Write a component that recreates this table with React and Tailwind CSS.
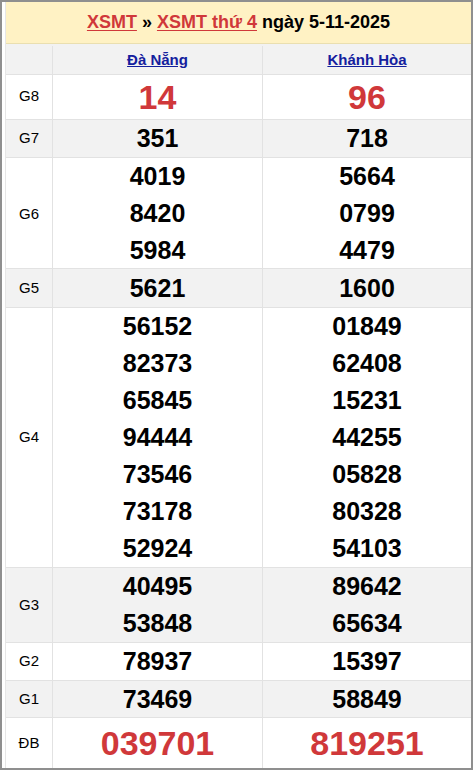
const rows = [
  { g: 'G8', a: ['14'], b: ['96'], big: true, h: 'h-[45px]', bg: 'bg-white' },
  { g: 'G7', a: ['351'], b: ['718'], h: 'h-[39px]', bg: 'bg-[#f2f2f2]' },
  { g: 'G6', a: ['4019', '8420', '5984'], b: ['5664', '0799', '4479'], h: 'h-[111px]', bg: 'bg-white' },
  { g: 'G5', a: ['5621'], b: ['1600'], h: 'h-[39px]', bg: 'bg-[#f2f2f2]' },
  {
    g: 'G4',
    a: ['56152', '82373', '65845', '94444', '73546', '73178', '52924'],
    b: ['01849', '62408', '15231', '44255', '05828', '80328', '54103'],
    h: 'h-[260px]',
    bg: 'bg-white',
  },
  { g: 'G3', a: ['40495', '53848'], b: ['89642', '65634'], h: 'h-[75px]', bg: 'bg-[#f2f2f2]' },
  { g: 'G2', a: ['78937'], b: ['15397'], h: 'h-[38px]', bg: 'bg-white' },
  { g: 'G1', a: ['73469'], b: ['58849'], h: 'h-[37px]', bg: 'bg-[#f2f2f2]' },
  { g: 'ĐB', a: ['039701'], b: ['819251'], big: true, h: 'h-[50px]', bg: 'bg-white' },
];

const Cell = ({ nums, big }) => (
  <div className="flex flex-col items-center justify-center border-l border-[#e2e2e2]">
    {nums.map((n) => (
      <div
        key={n}
        className={
          big
            ? 'text-[34px] leading-[40px] font-bold text-[#d0383a]'
            : 'text-[25px] leading-[37px] font-bold text-black'
        }
      >
        {n}
      </div>
    ))}
  </div>
);

export default function App() {
  return (
    <div
      className="w-[473px] h-[770px] border-2 border-[#8f8f8f] bg-white overflow-hidden"
      style={{ fontFamily: '"Liberation Sans", Arial, sans-serif' }}
    >
      <div className="h-full ml-[3px] border-l border-[#e6e6e6] flex flex-col">
        {/* title */}
        <div className="h-[42px] bg-[#fff2c4] flex items-center justify-center text-[18px] font-bold border-b border-[#eadfb0]">
          <a className="text-[#d0383a] underline underline-offset-2">XSMT</a>
          <span className="mx-[5px] text-black">»</span>
          <a className="text-[#d0383a] underline underline-offset-2">XSMT thứ 4</a>
          <span className="ml-[5px] text-black">ngày 5-11-2025</span>
        </div>

        {/* province header */}
        <div className="h-[31px] pt-[2px] grid grid-cols-[46px_210px_1fr] bg-[#f2f2f2] border-b border-[#e2e2e2]">
          <div />
          <div className="flex items-center justify-center border-l border-[#e2e2e2]">
            <a className="text-[15px] font-bold text-[#14209e] underline">Đà Nẵng</a>
          </div>
          <div className="flex items-center justify-center border-l border-[#e2e2e2]">
            <a className="text-[15px] font-bold text-[#14209e] underline">Khánh Hòa</a>
          </div>
        </div>

        {rows.map((r) => (
          <div
            key={r.g}
            className={`grid grid-cols-[46px_210px_1fr] border-b border-[#e2e2e2] last:border-b-0 ${r.h} ${r.bg}`}
          >
            <div className="flex items-center justify-center text-[15px] text-black">{r.g}</div>
            <Cell nums={r.a} big={r.big} />
            <Cell nums={r.b} big={r.big} />
          </div>
        ))}
      </div>
    </div>
  );
}
